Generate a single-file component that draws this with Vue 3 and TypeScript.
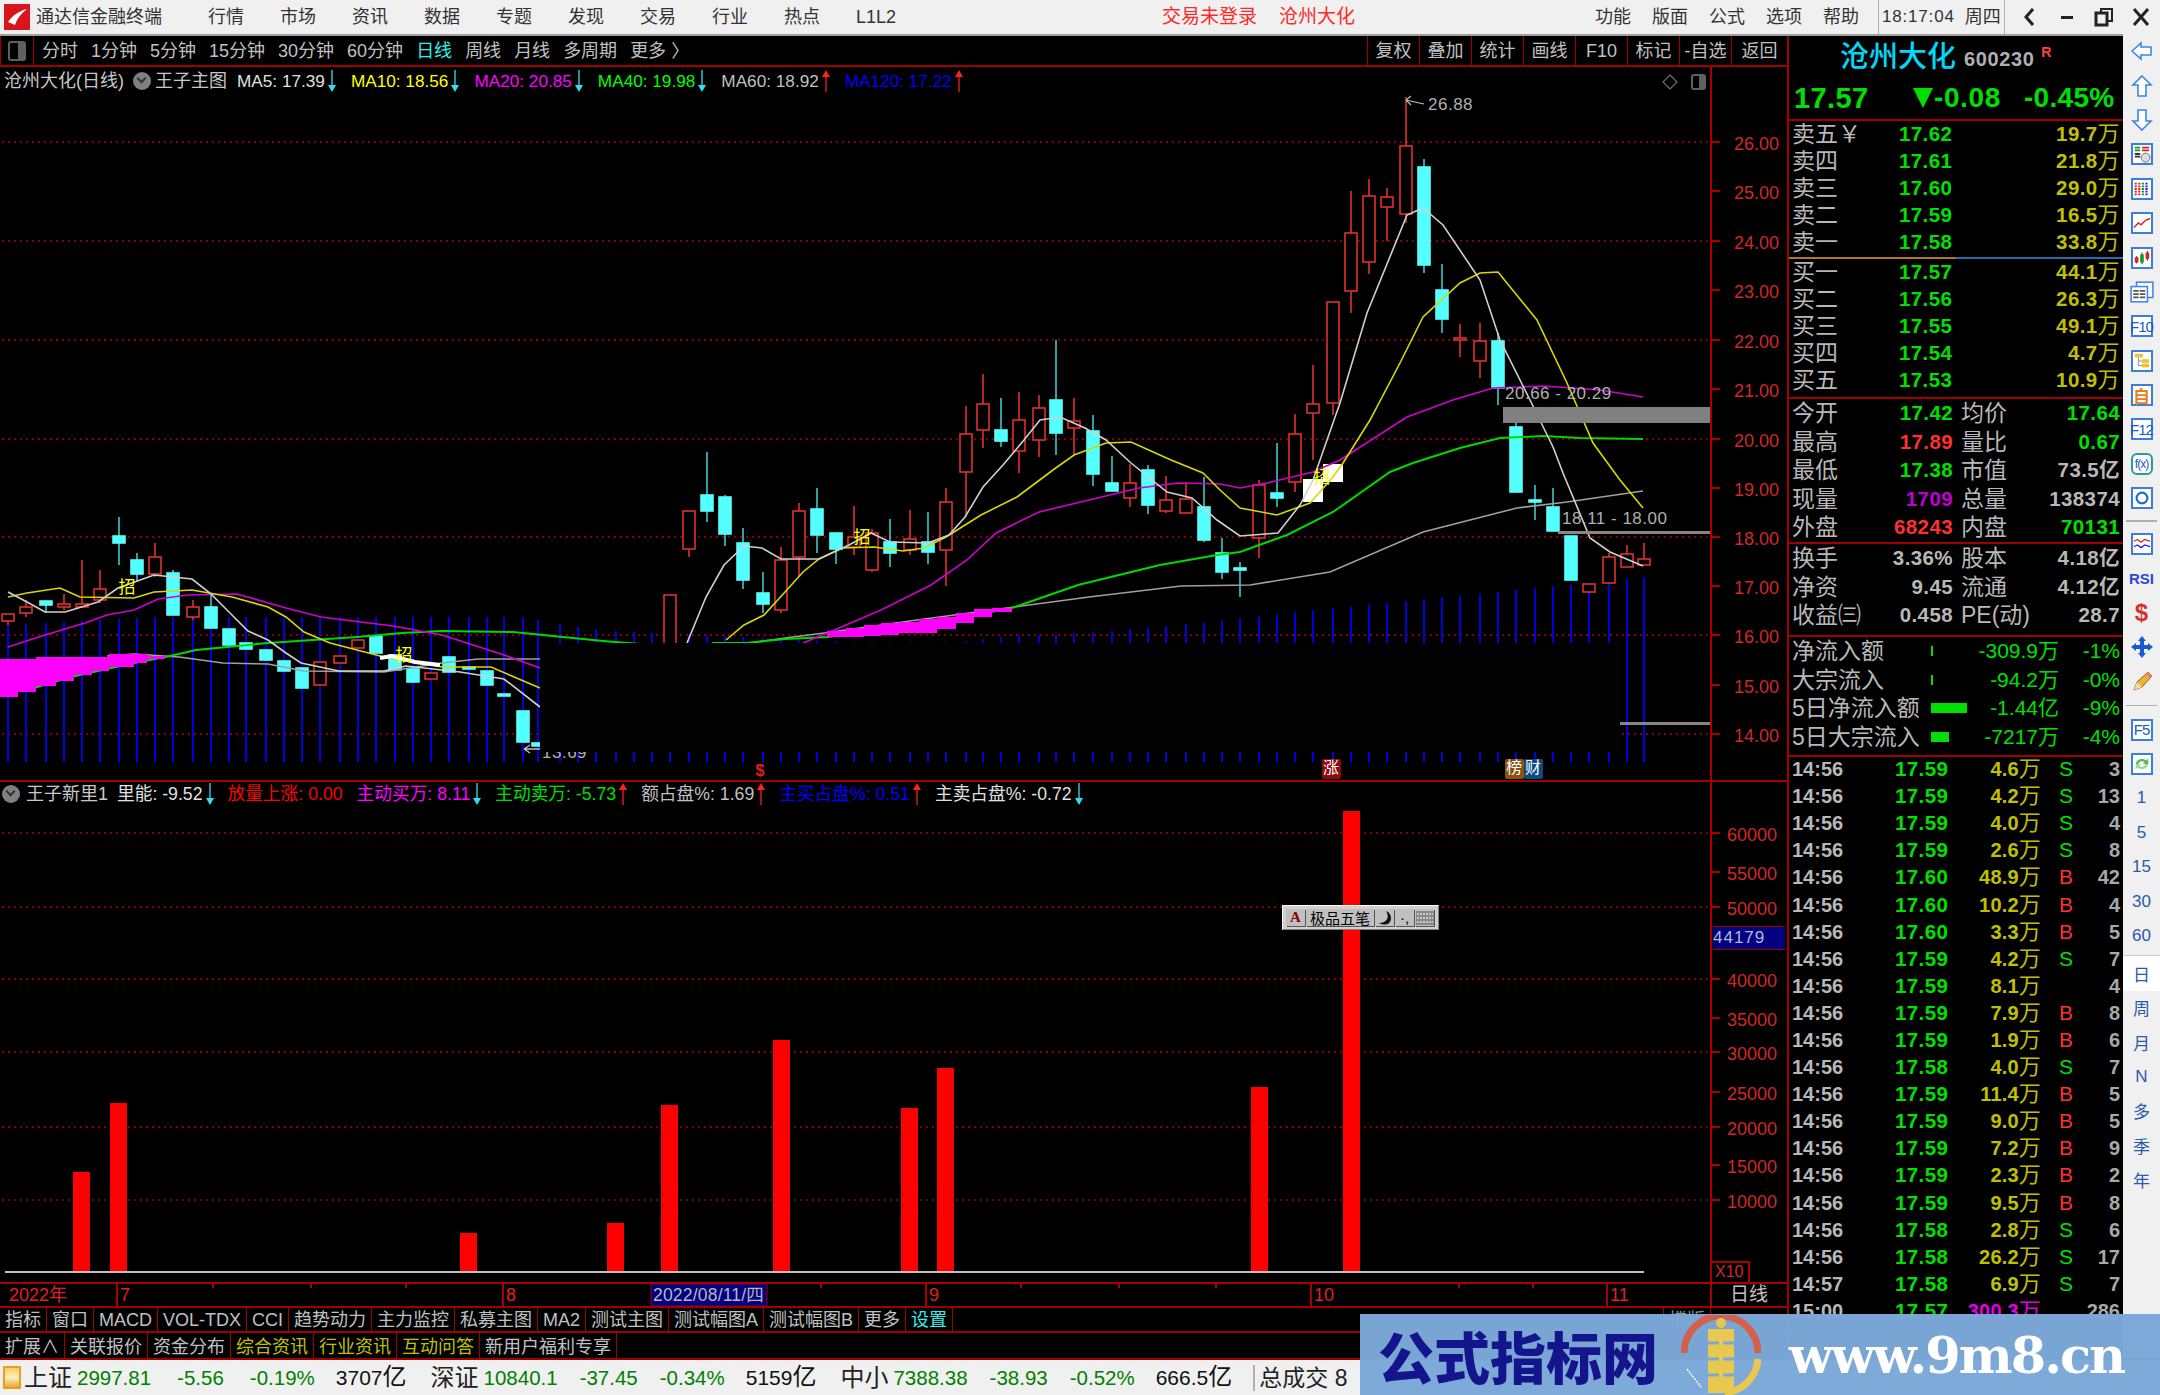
<script setup lang="ts">
type Candle = [number, number, number, number, number, 'r' | 'c']
type Pt = [number, number]

// x, high, body top, body bottom, low
const candles: Candle[] = [
  [8, 614, 614, 621, 625, 'r'], [26, 600, 607, 613, 617, 'r'], [46, 601, 601, 605, 613, 'c'], [64, 594, 604, 607, 610, 'r'],
  [82, 560, 604, 607, 607, 'r'], [100, 570, 589, 600, 603, 'r'], [119, 517, 536, 543, 565, 'c'], [137, 553, 560, 574, 582, 'c'],
  [155, 543, 557, 574, 577, 'r'], [173, 570, 573, 615, 615, 'c'], [193, 600, 607, 617, 620, 'r'], [211, 595, 607, 628, 628, 'c'],
  [229, 629, 629, 645, 645, 'c'], [246, 643, 643, 649, 649, 'c'], [266, 650, 650, 660, 660, 'c'], [284, 661, 661, 671, 671, 'c'],
  [302, 668, 668, 688, 688, 'c'], [320, 662, 662, 685, 685, 'r'], [340, 656, 656, 663, 663, 'r'], [358, 640, 640, 648, 648, 'r'],
  [376, 636, 636, 653, 653, 'c'], [395, 655, 655, 670, 670, 'c'], [413, 669, 669, 682, 682, 'c'], [431, 673, 673, 679, 679, 'r'],
  [449, 657, 657, 672, 672, 'c'], [469, 667, 667, 669, 669, 'c'], [487, 671, 671, 685, 685, 'c'], [504, 694, 694, 696, 696, 'c'],
  [523, 711, 711, 742, 742, 'c'], [538, 743, 743, 746, 746, 'c'],
  [670, 595, 595, 660, 660, 'r'], [689, 511, 511, 549, 557, 'r'], [707, 452, 495, 511, 522, 'c'], [725, 495, 497, 534, 546, 'c'],
  [743, 528, 543, 580, 589, 'c'], [763, 572, 593, 604, 613, 'c'], [781, 547, 560, 610, 613, 'r'], [799, 503, 511, 557, 577, 'r'],
  [817, 488, 509, 535, 553, 'c'], [836, 533, 533, 549, 564, 'c'], [854, 506, 537, 547, 555, 'r'], [872, 529, 533, 570, 572, 'r'],
  [890, 519, 542, 553, 567, 'c'], [910, 510, 539, 550, 555, 'r'], [928, 512, 542, 552, 564, 'c'], [946, 488, 502, 550, 586, 'r'],
  [966, 406, 434, 472, 517, 'r'], [983, 374, 404, 430, 448, 'r'], [1001, 398, 430, 441, 447, 'c'], [1019, 392, 420, 451, 473, 'r'],
  [1039, 395, 408, 440, 457, 'r'], [1056, 340, 400, 433, 455, 'c'], [1074, 398, 421, 428, 455, 'r'], [1093, 415, 431, 474, 486, 'c'],
  [1112, 456, 483, 491, 491, 'c'], [1130, 464, 483, 498, 507, 'r'], [1148, 465, 470, 505, 514, 'c'], [1166, 476, 500, 511, 513, 'r'],
  [1186, 482, 499, 513, 514, 'r'], [1204, 477, 507, 540, 542, 'c'], [1222, 538, 553, 572, 579, 'c'], [1240, 562, 568, 570, 597, 'c'],
  [1259, 480, 485, 538, 558, 'r'], [1277, 443, 493, 498, 507, 'c'], [1295, 414, 434, 482, 492, 'r'], [1313, 365, 404, 413, 460, 'r'],
  [1333, 302, 302, 403, 415, 'r'], [1351, 191, 233, 291, 313, 'r'], [1369, 179, 196, 262, 274, 'r'], [1387, 188, 197, 207, 241, 'r'],
  [1406, 97, 146, 214, 223, 'r'], [1424, 159, 167, 265, 273, 'c'], [1442, 264, 290, 319, 333, 'c'], [1460, 324, 338, 340, 357, 'r'],
  [1480, 323, 341, 361, 378, 'r'], [1498, 333, 341, 388, 405, 'c'], [1516, 423, 427, 492, 492, 'c'], [1535, 485, 500, 502, 520, 'c'],
  [1553, 488, 507, 531, 531, 'c'], [1571, 536, 536, 580, 580, 'c'], [1589, 584, 584, 592, 592, 'r'], [1609, 553, 557, 583, 583, 'r'],
  [1627, 545, 554, 567, 567, 'r'], [1644, 543, 559, 565, 565, 'r'],
]

const barTop: Pt[] = [[0, 625], [150, 617], [520, 617], [600, 630], [700, 635], [850, 642], [960, 642], [1000, 637], [1100, 632], [1200, 623], [1300, 612], [1644, 577]]

function topAt(x: number): number {
  for (let i = 1; i < barTop.length; i++) {
    const [x0, y0] = barTop[i - 1]
    const [x1, y1] = barTop[i]
    if (x <= x1) return y0 + ((y1 - y0) * (x - x0)) / (x1 - x0)
  }
  return 577
}

const barXs = [...candles.map((c) => c[0]), 560, 578, 596, 616, 634, 652]

const toPath = (pts: Pt[]) => pts.map((p) => p.join(',')).join(' ')

const ma5Left: Pt[] = [[8, 592], [27, 602], [45, 612], [65, 612], [98, 602], [118, 588], [154, 575], [192, 579], [210, 593], [230, 613], [248, 631], [268, 640], [286, 653], [301, 663], [339, 671], [384, 671], [406, 666], [460, 672], [504, 679], [540, 707]]
const ma10Left: Pt[] = [[8, 597], [27, 593], [60, 588], [80, 597], [134, 598], [154, 592], [192, 590], [232, 597], [268, 607], [286, 617], [304, 632], [330, 643], [384, 657], [442, 667], [491, 667], [540, 688]]
const ma20Left: Pt[] = [[8, 647], [45, 635], [85, 623], [107, 615], [134, 610], [158, 599], [188, 595], [237, 594], [286, 608], [321, 617], [393, 626], [442, 635], [504, 655], [540, 668]]
const ma40Left: Pt[] = [[27, 690], [71, 677], [134, 663], [170, 656], [196, 650], [268, 643], [357, 637], [402, 633], [442, 631], [513, 632], [603, 641], [640, 644]]
const ma60Left: Pt[] = [[107, 656], [134, 654], [179, 657], [223, 663], [268, 664], [304, 671], [384, 672], [442, 663], [478, 659], [540, 659]]

const ma5: Pt[] = [[687, 643], [706, 597], [724, 565], [744, 546], [762, 548], [781, 559], [819, 559], [849, 545], [871, 533], [890, 542], [928, 543], [949, 535], [965, 517], [983, 487], [1003, 465], [1024, 440], [1040, 420], [1060, 417], [1085, 428], [1106, 440], [1131, 463], [1167, 492], [1192, 498], [1217, 520], [1240, 536], [1278, 533], [1300, 505], [1313, 480], [1340, 403], [1367, 313], [1407, 215], [1423, 208], [1443, 225], [1480, 280], [1500, 340], [1530, 400], [1553, 447], [1563, 473], [1590, 538], [1610, 552], [1643, 566]]
const ma10: Pt[] = [[726, 640], [744, 625], [764, 615], [785, 592], [803, 572], [819, 559], [842, 548], [874, 547], [903, 551], [924, 548], [946, 537], [981, 515], [1017, 497], [1053, 470], [1074, 455], [1106, 443], [1131, 442], [1171, 460], [1203, 473], [1220, 490], [1240, 508], [1277, 515], [1310, 503], [1333, 477], [1343, 463], [1370, 420], [1400, 363], [1423, 317], [1460, 283], [1480, 273], [1498, 272], [1537, 320], [1567, 383], [1593, 443], [1620, 480], [1643, 508]]
const ma20: Pt[] = [[803, 643], [839, 628], [881, 610], [931, 585], [967, 560], [996, 533], [1039, 512], [1089, 500], [1139, 488], [1178, 483], [1220, 484], [1240, 488], [1267, 483], [1313, 472], [1340, 460], [1407, 417], [1453, 400], [1493, 388], [1543, 386], [1600, 390], [1643, 397]]
const ma40: Pt[] = [[712, 643], [746, 643], [785, 639], [828, 637], [920, 625], [1012, 608], [1078, 585], [1160, 565], [1217, 555], [1240, 552], [1287, 535], [1333, 512], [1390, 472], [1413, 463], [1460, 448], [1500, 438], [1543, 436], [1580, 438], [1643, 439]]
const ma60: Pt[] = [[749, 643], [785, 638], [824, 633], [917, 620], [1014, 607], [1089, 597], [1181, 586], [1250, 585], [1330, 572], [1423, 532], [1517, 508], [1567, 502], [1643, 491]]

const lines = [
  { pts: ma60Left, cls: 'l-gray' }, { pts: ma60, cls: 'l-gray' },
  { pts: ma40Left, cls: 'l-green' }, { pts: ma40, cls: 'l-green' },
  { pts: ma20Left, cls: 'l-mag' }, { pts: ma20, cls: 'l-mag' },
  { pts: ma10Left, cls: 'l-yel' }, { pts: ma10, cls: 'l-yel' },
  { pts: ma5Left, cls: 'l-wht' }, { pts: ma5, cls: 'l-wht' },
]

// x0, x1, top, bottom
const bandSteps = [
  [0, 18, 659, 697], [18, 36, 659, 692], [36, 56, 657, 686], [56, 74, 657, 681], [74, 92, 657, 675], [92, 109, 657, 671], [109, 134, 654, 667], [134, 147, 654, 663], [147, 165, 656, 659],
  [827, 846, 631, 637], [846, 864, 628, 637], [864, 881, 625, 636], [881, 899, 623, 635], [899, 919, 622, 633], [919, 937, 619, 633], [937, 956, 617, 629], [956, 974, 613, 623], [974, 992, 609, 617], [992, 1012, 608, 612],
]

const priceAxis: Pt[] = [[26, 142], [25, 191], [24, 241], [23, 290], [22, 340], [21, 389], [20, 439], [19, 488], [18, 537], [17, 586], [16, 635], [15, 685], [14, 734]]
const dotsMain = [142, 241, 340, 439, 537, 635, 734]

const volAxis: Pt[] = [[60000, 833], [55000, 872], [50000, 907], [40000, 979], [35000, 1018], [30000, 1052], [25000, 1092], [20000, 1127], [15000, 1165], [10000, 1200]]
const dotsSub = [833, 907, 979, 1052, 1127, 1200]
const volBars: Pt[] = [[73, 1172], [110, 1103], [460, 1233], [607, 1223], [661, 1105], [773, 1040], [901, 1108], [937, 1068], [1251, 1087], [1343, 811]]

const mainHeader = [
  { text: 'MA5: 17.39', color: '#e0e0e0', up: false },
  { text: 'MA10: 18.56', color: '#ffff00', up: false },
  { text: 'MA20: 20.85', color: '#ff00ff', up: false },
  { text: 'MA40: 19.98', color: '#00ff00', up: false },
  { text: 'MA60: 18.92', color: '#c0c0c0', up: true },
  { text: 'MA120: 17.22', color: '#0000ff', up: true },
]
const subHeader = [
  { text: '里能: -9.52', color: '#e0e0e0', up: false },
  { text: '放量上涨: 0.00', color: '#ff0000', up: null },
  { text: '主动买万: 8.11', color: '#ff00ff', up: false },
  { text: '主动卖万: -5.73', color: '#00e000', up: true },
  { text: '额占盘%: 1.69', color: '#c0c0c0', up: true },
  { text: '主买占盘%: 0.51', color: '#0000ff', up: true },
  { text: '主卖占盘%: -0.72', color: '#e0e0e0', up: false },
]

const menus = ['行情', '市场', '资讯', '数据', '专题', '发现', '交易', '行业', '热点', 'L1L2']
const rightMenus = ['功能', '版面', '公式', '选项', '帮助']
const periods = ['分时', '1分钟', '5分钟', '15分钟', '30分钟', '60分钟', '日线', '周线', '月线', '多周期', '更多 〉']
const actions = ['复权', '叠加', '统计', '画线', 'F10', '标记', '-自选', '返回']

const tabsA = ['指标', '窗口', 'MACD', 'VOL-TDX', 'CCI', '趋势动力', '主力监控', '私募主图', 'MA2', '测试主图', '测试幅图A', '测试幅图B', '更多', '设置']
const tabsB = ['扩展∧', '关联报价', '资金分布', '综合资讯', '行业资讯', '互动问答', '新用户福利专享']

const dateTicks = [213, 311, 406, 821, 1021, 1119, 1216, 1459, 1533]
const dateMarks = [{ x: 117, t: '7' }, { x: 503, t: '8' }, { x: 926, t: '9' }, { x: 1311, t: '10' }, { x: 1607, t: '11' }]

const sells = [['卖五￥', '17.62', '19.7'], ['卖四', '17.61', '21.8'], ['卖三', '17.60', '29.0'], ['卖二', '17.59', '16.5'], ['卖一', '17.58', '33.8']]
const buys = [['买一', '17.57', '44.1'], ['买二', '17.56', '26.3'], ['买三', '17.55', '49.1'], ['买四', '17.54', '4.7'], ['买五', '17.53', '10.9']]

const quoteA = [
  { a: '今开', b: '17.42', bc: 'green', c: '均价', d: '17.64', dc: 'green' },
  { a: '最高', b: '17.89', bc: 'red', c: '量比', d: '0.67', dc: 'green' },
  { a: '最低', b: '17.38', bc: 'green', c: '市值', d: '73.5亿', dc: 'gray' },
  { a: '现量', b: '1709', bc: 'purple', c: '总量', d: '138374', dc: 'gray' },
  { a: '外盘', b: '68243', bc: 'red', c: '内盘', d: '70131', dc: 'green' },
]
const quoteB = [
  { a: '换手', b: '3.36%', bc: 'gray', c: '股本', d: '4.18亿', dc: 'gray' },
  { a: '净资', b: '9.45', bc: 'gray', c: '流通', d: '4.12亿', dc: 'gray' },
  { a: '收益㈢', b: '0.458', bc: 'gray', c: 'PE(动)', d: '28.7', dc: 'gray' },
]
const flows = [
  { name: '净流入额', w: 2, v: '-309.9万', p: '-1%' },
  { name: '大宗流入', w: 2, v: '-94.2万', p: '-0%' },
  { name: '5日净流入额', w: 36, v: '-1.44亿', p: '-9%' },
  { name: '5日大宗流入', w: 18, v: '-7217万', p: '-4%' },
]

const ticks = [
  ['14:56', '17.59', '4.6', 'S', '3'], ['14:56', '17.59', '4.2', 'S', '13'], ['14:56', '17.59', '4.0', 'S', '4'],
  ['14:56', '17.59', '2.6', 'S', '8'], ['14:56', '17.60', '48.9', 'B', '42'], ['14:56', '17.60', '10.2', 'B', '4'],
  ['14:56', '17.60', '3.3', 'B', '5'], ['14:56', '17.59', '4.2', 'S', '7'], ['14:56', '17.59', '8.1', '', '4'],
  ['14:56', '17.59', '7.9', 'B', '8'], ['14:56', '17.59', '1.9', 'B', '6'], ['14:56', '17.58', '4.0', 'S', '7'],
  ['14:56', '17.59', '11.4', 'B', '5'], ['14:56', '17.59', '9.0', 'B', '5'], ['14:56', '17.59', '7.2', 'B', '9'],
  ['14:56', '17.59', '2.3', 'B', '2'], ['14:56', '17.59', '9.5', 'B', '8'], ['14:56', '17.58', '2.8', 'S', '6'],
  ['14:56', '17.58', '26.2', 'S', '17'], ['14:57', '17.58', '6.9', 'S', '7'], ['15:00', '17.57', '300.3', '', '286'],
]

const indices = [
  { name: '上证', v: ['2997.81', '-5.56', '-0.19%'], amt: '3707' },
  { name: '深证', v: ['10840.1', '-37.45', '-0.34%'], amt: '5159' },
  { name: '中小', v: ['7388.38', '-38.93', '-0.52%'], amt: '666.5' },
]
</script>

<template>
  <div class="app">
    <header class="titlebar">
      <svg class="logo" viewBox="0 0 26 26">
        <rect width="26" height="26" fill="#d8141c" />
        <path d="M4 18 C9 11 15 7 23 5 C17 10 14 13 11 21 Z" fill="#fff" />
      </svg>
      <span class="app-name">通达信金融终端</span>
      <nav class="menu">
        <span v-for="m in menus" :key="m">{{ m }}</span>
      </nav>
      <div class="alert">
        <span>交易未登录</span>
        <span>沧州大化</span>
      </div>
      <nav class="menu menu-right">
        <span v-for="m in rightMenus" :key="m">{{ m }}</span>
      </nav>
      <div class="clock">
        <span class="time">18:17:04</span>
        <span>周四</span>
      </div>
      <div class="winbtns">
        <svg viewBox="0 0 24 24"><path d="M15 4 L8 12 L15 20" fill="none" stroke="#222" stroke-width="3" /></svg>
        <svg viewBox="0 0 24 24"><rect x="6" y="11" width="12" height="3" fill="#222" /></svg>
        <svg viewBox="0 0 24 24"><rect x="9" y="4" width="11" height="12" fill="none" stroke="#222" stroke-width="2" /><rect x="4" y="8" width="11" height="12" fill="#f0f0f0" stroke="#222" stroke-width="3" /></svg>
        <svg viewBox="0 0 24 24"><path d="M5 4 L19 20 M19 4 L5 20" stroke="#222" stroke-width="3" /></svg>
      </div>
    </header>

    <div class="workspace">
      <section class="left">
        <div class="toolbar">
          <div class="pane-toggle"><i class="toggle-ico"></i></div>
          <div class="periods">
            <span v-for="p in periods" :key="p" :class="{ active: p === '日线' }">{{ p }}</span>
          </div>
          <div class="actions">
            <span v-for="a in actions" :key="a">{{ a }}</span>
          </div>
        </div>

        <div class="pane pane-main">
          <svg class="plot" viewBox="0 67 1787 713" width="1787" height="713">
            <line v-for="y in dotsMain" :key="y" x1="2" x2="1711" :y1="y" :y2="y" class="dots" />
            <rect v-for="x in barXs" :key="'b' + x" :x="x - 1" :y="topAt(x)" width="2" :height="762 - topAt(x)" fill="#0000e0" />
            <g v-for="c in candles" :key="'c' + c[0]">
              <line :x1="c[0]" :x2="c[0]" :y1="c[1]" :y2="c[4]" :stroke="c[5] === 'r' ? '#e03030' : '#3ccaca'" stroke-width="1.6" />
              <rect
                :x="c[0] - 6"
                :y="c[2]"
                width="12"
                :height="c[3] - c[2]"
                :fill="c[5] === 'r' ? '#000' : '#54ffff'"
                :stroke="c[5] === 'r' ? '#e03030' : '#54ffff'"
                stroke-width="1.6"
              />
            </g>
            <rect x="1303" y="479" width="20" height="23" fill="#fff" />
            <rect x="1323" y="464" width="20" height="18" fill="#fff" />
            <polyline v-for="(l, i) in lines" :key="'l' + i" :points="toPath(l.pts)" :class="l.cls" fill="none" />
            <rect v-for="(s, i) in bandSteps" :key="'s' + i" :x="s[0]" :y="s[2]" :width="s[1] - s[0]" :height="s[3] - s[2]" fill="#ff00ff" />
            <polyline points="380,658 392,656 415,662 440,665" fill="none" stroke="#fff" stroke-width="4" />
            <text v-for="p in [[127, 589], [404, 657], [862, 539], [1322, 479]]" :key="p[0]" :x="p[0]" :y="p[1]" class="zhao" text-anchor="middle" dominant-baseline="middle">招</text>

            <!-- blanked out part of the capture -->
            <text x="542" y="754" class="lbl" dominant-baseline="middle">13.69</text>
            <rect x="540" y="643" width="1080" height="109" fill="#020202" />
            <path d="M524 749 H540 M524 749 L530 745 M524 749 L530 753" stroke="#c0c0c0" stroke-width="1.4" fill="none" />

            <rect x="1503" y="407" width="207" height="16" fill="#808080" />
            <rect x="1558" y="531" width="152" height="3" fill="#868686" />
            <rect x="1620" y="722" width="90" height="3" fill="#868686" />
            <text x="1505" y="395" class="lbl" dominant-baseline="middle">20.66 - 20.29</text>
            <text x="1562" y="520" class="lbl" dominant-baseline="middle">18.11 - 18.00</text>
            <text x="1428" y="106" class="lbl" dominant-baseline="middle">26.88</text>
            <path d="M1406 100 L1424 104 M1406 100 L1411 96 M1406 100 L1411 105" stroke="#c0c0c0" stroke-width="1.2" fill="none" />

            <text x="760" y="772" class="dollar" text-anchor="middle" dominant-baseline="middle">$</text>
            <rect x="1322" y="759" width="19" height="20" rx="2" fill="#8a0c0c" />
            <text x="1331" y="769" class="chip" text-anchor="middle" dominant-baseline="middle">涨</text>
            <rect x="1505" y="759" width="19" height="20" rx="2" fill="#8a5212" />
            <text x="1514" y="769" class="chip" text-anchor="middle" dominant-baseline="middle">榜</text>
            <rect x="1524" y="759" width="19" height="20" rx="2" fill="#0c4a80" />
            <text x="1533" y="769" class="chip" text-anchor="middle" dominant-baseline="middle">财</text>

            <line x1="1711" x2="1711" y1="67" y2="780" class="axis" />
            <g v-for="t in priceAxis" :key="t[0]">
              <line x1="1711" x2="1720" :y1="t[1]" :y2="t[1]" class="axis" />
              <text x="1734" :y="t[1] + 3" class="tick" dominant-baseline="middle">{{ t[0].toFixed(2) }}</text>
            </g>
          </svg>

          <div class="pane-head">
            <span class="stock">沧州大化(日线)</span>
            <i class="chev"></i>
            <span class="stock ind">王子主图</span>
            <span v-for="h in mainHeader" :key="h.text" class="head-item" :style="{ color: h.color }">
              {{ h.text }}
              <svg class="arrow" viewBox="0 0 8 22">
                <path v-if="h.up" d="M4 22 V5" stroke="#e02020" stroke-width="1.4" />
                <path v-if="h.up" d="M4 0 L8 7 H0 Z" fill="#ff2020" />
                <path v-if="!h.up" d="M4 0 V17" stroke="#30d0e0" stroke-width="1.4" />
                <path v-if="!h.up" d="M4 22 L8 15 H0 Z" fill="#30e0f0" />
              </svg>
            </span>
          </div>
          <div class="corner-icons">
            <svg viewBox="0 0 18 18" width="18" height="18"><path d="M9 2 L16 9 L9 16 L2 9 Z" fill="none" stroke="#707070" stroke-width="1.2" /></svg>
            <i class="toggle-ico small"></i>
          </div>
        </div>

        <div class="pane pane-sub">
          <svg class="plot" viewBox="0 782 1787 500" width="1787" height="500">
            <line v-for="y in dotsSub" :key="y" x1="2" x2="1711" :y1="y" :y2="y" class="dots" />
            <rect v-for="b in volBars" :key="b[0]" :x="b[0]" :y="b[1]" width="17" :height="1272 - b[1]" fill="#ff0000" />
            <rect x="5" y="1271" width="1639" height="2" fill="#c0c0c0" />
            <line x1="1711" x2="1711" y1="782" y2="1282" class="axis" />
            <g v-for="t in volAxis" :key="t[0]">
              <line x1="1711" x2="1720" :y1="t[1]" :y2="t[1]" class="axis" />
              <text x="1727" :y="t[1] + 3" class="tick" dominant-baseline="middle">{{ t[0] }}</text>
            </g>
            <path d="M1711 1262 H1749 V1282" fill="none" class="axis" />
            <text x="1715" y="1273" class="tick small" dominant-baseline="middle">X10</text>
          </svg>
          <div class="pane-head sub">
            <i class="chev"></i>
            <span class="stock ind">王子新里1</span>
            <span v-for="h in subHeader" :key="h.text" class="head-item" :style="{ color: h.color }">
              {{ h.text }}
              <svg v-if="h.up !== null" class="arrow" viewBox="0 0 8 22">
                <path v-if="h.up" d="M4 22 V5" stroke="#e02020" stroke-width="1.4" />
                <path v-if="h.up" d="M4 0 L8 7 H0 Z" fill="#ff2020" />
                <path v-if="!h.up" d="M4 0 V17" stroke="#30d0e0" stroke-width="1.4" />
                <path v-if="!h.up" d="M4 22 L8 15 H0 Z" fill="#30e0f0" />
              </svg>
            </span>
          </div>
          <div class="cur-value">44179</div>
          <div class="ime">
            <span class="ime-btn ime-a">A</span>
            <span class="ime-btn ime-name">极品五笔</span>
            <span class="ime-btn ime-moon">
              <svg viewBox="0 0 16 16" width="16" height="16"><path d="M9 1 C13 7 10 13 2 13 C7 16 14 15 14 8 C14 5 12 2 9 1 Z" fill="#111" /></svg>
            </span>
            <span class="ime-btn ime-dot">·,</span>
            <span class="ime-btn ime-kbd">
              <svg viewBox="0 0 18 14" width="18" height="14"><rect width="18" height="14" fill="#888" /><path d="M1 3 H17 M1 7 H17 M1 11 H17" stroke="#ddd" stroke-width="1.5" stroke-dasharray="2 1" /></svg>
            </span>
          </div>
        </div>

        <div class="date-axis">
          <svg viewBox="0 0 1787 22" width="1787" height="22">
            <text x="9" y="12" class="date-red" dominant-baseline="middle">2022年</text>
            <line v-for="x in dateTicks" :key="x" :x1="x" :x2="x" y1="0" y2="4" class="axis" />
            <g v-for="m in dateMarks" :key="m.x">
              <line :x1="m.x" :x2="m.x" y1="0" y2="22" class="axis" />
              <text :x="m.x + 3" y="12" class="date-red" dominant-baseline="middle">{{ m.t }}</text>
            </g>
            <rect x="651" y="0" width="116" height="22" fill="#000080" stroke="#a00000" />
            <text x="653" y="12" class="date-cur" dominant-baseline="middle">2022/08/11/四</text>
            <line x1="1711" x2="1711" y1="0" y2="22" class="axis" />
            <text x="1749" y="12" class="date-day" text-anchor="middle" dominant-baseline="middle">日线</text>
          </svg>
        </div>

        <div class="tabs tabs-a">
          <span v-for="t in tabsA" :key="t" :class="{ cyan: t === '设置' }">{{ t }}</span>
          <span class="tabs-end">撑版</span>
        </div>
        <div class="tabs tabs-b">
          <span v-for="(t, i) in tabsB" :key="t" :class="{ olive: i >= 3 && i <= 5 }">{{ t }}</span>
        </div>
      </section>

      <aside class="panel">
        <div class="name-row">
          <span class="name">沧州大化</span>
          <span class="code">600230</span>
          <sup class="r">R</sup>
        </div>
        <div class="price-row">
          <span class="last">17.57</span>
          <span class="tri"></span>
          <span class="chg">-0.08</span>
          <span class="pct">-0.45%</span>
        </div>

        <div class="book">
          <div v-for="r in sells" :key="r[0]" class="book-row">
            <span class="lab">{{ r[0] }}</span>
            <span class="pri">{{ r[1] }}</span>
            <span class="vol">{{ r[2] }}<em>万</em></span>
          </div>
        </div>
        <div class="mid-line"></div>
        <div class="book book-buy">
          <div v-for="r in buys" :key="r[0]" class="book-row">
            <span class="lab">{{ r[0] }}</span>
            <span class="pri">{{ r[1] }}</span>
            <span class="vol">{{ r[2] }}<em>万</em></span>
          </div>
        </div>

        <div class="quote">
          <div v-for="q in quoteA" :key="q.a" class="q-row">
            <span class="lab">{{ q.a }}</span>
            <span class="qv" :class="q.bc">{{ q.b }}</span>
            <span class="lab q2">{{ q.c }}</span>
            <span class="qv" :class="q.dc">{{ q.d }}</span>
          </div>
        </div>
        <div class="quote quote-b">
          <div v-for="q in quoteB" :key="q.a" class="q-row">
            <span class="lab">{{ q.a }}</span>
            <span class="qv" :class="q.bc">{{ q.b }}</span>
            <span class="lab q2">{{ q.c }}</span>
            <span class="qv" :class="q.dc">{{ q.d }}</span>
          </div>
        </div>
        <div class="flows">
          <div v-for="f in flows" :key="f.name" class="flow-row">
            <span class="lab flow-name">{{ f.name }}</span>
            <span class="flow-bar"><i :style="{ width: f.w + 'px' }"></i></span>
            <span class="flow-v">{{ f.v }}</span>
            <span class="flow-p">{{ f.p }}</span>
          </div>
        </div>
        <div class="ticks">
          <div v-for="(t, i) in ticks" :key="i" class="tick-row">
            <span class="t-time">{{ t[0] }}</span>
            <span class="t-pri">{{ t[1] }}</span>
            <span class="t-vol" :class="{ big: t[2] === '300.3' }">{{ t[2] }}<em>万</em></span>
            <span class="t-side" :class="t[3] === 'B' ? 'red' : 'green'">{{ t[3] }}</span>
            <span class="t-cnt">{{ t[4] }}</span>
          </div>
        </div>
      </aside>

      <aside class="tools">
        <div class="tool"><svg viewBox="0 0 24 24"><path d="M2 12 L11 4 V8 H21 V16 H11 V20 Z" fill="#fff" stroke="#3a86e8" stroke-width="1.6" /></svg></div>
        <div class="tool"><svg viewBox="0 0 24 24"><path d="M12 2 L21 11 H16 V22 H8 V11 H3 Z" fill="#fff" stroke="#3a86e8" stroke-width="1.6" /></svg></div>
        <div class="tool"><svg viewBox="0 0 24 24"><path d="M12 22 L21 13 H16 V2 H8 V13 H3 Z" fill="#fff" stroke="#3a86e8" stroke-width="1.6" /></svg></div>
        <div class="tool"><span class="box"><svg viewBox="0 0 20 20"><path d="M2 3 H8 M2 6 H8" stroke="#0a9a30" stroke-width="2" /><path d="M10 3 H18 M10 6 H18" stroke="#e02020" stroke-width="2" /><path d="M2 10 H8 M2 13 H8" stroke="#333" stroke-width="2" /><circle cx="14" cy="14" r="5" fill="#ddd" stroke="#666" /></svg></span></div>
        <div class="tool"><span class="box"><svg viewBox="0 0 20 20"><path d="M3 3 V18 M7 3 V18" stroke="#e02020" stroke-width="2.4" stroke-dasharray="2 1" /><path d="M11 3 V18" stroke="#0a9a30" stroke-width="2.4" stroke-dasharray="2 1" /><path d="M15 3 V18" stroke="#2020e0" stroke-width="2.4" stroke-dasharray="2 1" /></svg></span></div>
        <div class="tool"><span class="box"><svg viewBox="0 0 20 20"><path d="M1 15 L6 10 L9 12 L14 7 L19 5" fill="none" stroke="#e02020" stroke-width="1.6" /></svg></span></div>
        <div class="tool"><span class="box"><svg viewBox="0 0 20 20"><path d="M4 8 V16 M10 4 V17 M16 2 V13" stroke="#111" stroke-width="1" /><rect x="2" y="9" width="4" height="6" fill="#e02020" /><rect x="8" y="6" width="4" height="9" fill="#0a9a30" /><rect x="14" y="4" width="4" height="7" fill="#e02020" /></svg></span></div>
        <div class="tool"><span class="box plain"><svg viewBox="0 0 22 20"><rect x="6" y="1" width="15" height="14" fill="#fff" stroke="#3a86e8" stroke-width="1.4" /><rect x="1" y="5" width="15" height="14" fill="#fff" stroke="#3a86e8" stroke-width="1.4" /><path d="M3 9 H14 M3 12 H14 M3 15 H14" stroke="#555" stroke-width="1.6" stroke-dasharray="5 1" /></svg></span></div>
        <div class="tool"><span class="box txt">F10</span></div>
        <div class="tool"><span class="box"><svg viewBox="0 0 20 20"><path d="M6 5 V15 H11 M6 10 H11" fill="none" stroke="#888" /><rect x="2" y="2" width="9" height="4" fill="#f0c030" /><rect x="10" y="8" width="8" height="4" fill="#f0c030" /><rect x="10" y="13" width="8" height="4" fill="#f0c030" /></svg></span></div>
        <div class="tool"><span class="box txt orange">自</span></div>
        <div class="tool"><span class="box txt">F12</span></div>
        <div class="tool"><span class="box round txt small">f(x)</span></div>
        <div class="tool"><span class="box"><svg viewBox="0 0 20 20"><circle cx="10" cy="10" r="6" fill="none" stroke="#1a6ad0" stroke-width="2.4" /></svg></span></div>
        <div class="tool-sep"></div>
        <div class="tool"><span class="box"><svg viewBox="0 0 20 20"><path d="M1 7 L5 5 L9 8 L13 5 L19 7" fill="none" stroke="#e02020" stroke-width="1.4" /><path d="M1 13 L5 11 L9 14 L13 11 L19 13" fill="none" stroke="#2020e0" stroke-width="1.4" /></svg></span></div>
        <div class="tool"><b class="rsi">RSI</b></div>
        <div class="tool"><b class="dollar-ico">$</b></div>
        <div class="tool"><svg viewBox="0 0 24 24"><path d="M12 1 L16 6 H14 V10 H18 V8 L23 12 L18 16 V14 H14 V18 H16 L12 23 L8 18 H10 V14 H6 V16 L1 12 L6 8 V10 H10 V6 H8 Z" fill="#1a5ad0" /></svg></div>
        <div class="tool"><svg viewBox="0 0 24 24"><path d="M4 20 L7 12 L18 2 L22 6 L12 17 Z" fill="#f0b030" stroke="#8a6a20" /><path d="M18 2 L22 6 L20 8 L16 4 Z" fill="#e88080" /><path d="M4 20 L7 12 L12 17 Z" fill="#f0dcb0" /></svg></div>
        <div class="tool-sep wide"></div>
        <div class="tool"><span class="box txt">F5</span></div>
        <div class="tool"><span class="box"><svg viewBox="0 0 20 20"><path d="M3 10 C4 4 11 3 15 6 L17 4 V10 H11 L13 8 C10 6 7 7 6 10 Z" fill="#50c050" /><path d="M17 10 C16 16 9 17 5 14 L3 16 V10 H9 L7 12 C10 14 13 13 14 10 Z" fill="#a0d8a0" /></svg></span></div>
        <div class="tool num">1</div>
        <div class="tool num">5</div>
        <div class="tool num">15</div>
        <div class="tool num">30</div>
        <div class="tool num">60</div>
        <div class="tool num day">日</div>
        <div class="tool num">周</div>
        <div class="tool num">月</div>
        <div class="tool num">N</div>
        <div class="tool num">多</div>
        <div class="tool num">季</div>
        <div class="tool num">年</div>
      </aside>
    </div>

    <footer class="status">
      <i class="status-ico"></i>
      <div v-for="x in indices" :key="x.name" class="index">
        <span class="ix-name">{{ x.name }}</span>
        <span class="ix-val first">{{ x.v[0] }}</span>
        <span class="ix-val">{{ x.v[1] }}</span>
        <span class="ix-val">{{ x.v[2] }}</span>
        <span class="ix-amt">{{ x.amt }}<em>亿</em></span>
      </div>
      <div class="turnover">总成交 8</div>
    </footer>

    <div class="watermark">
      <span class="wm-cn">公式指标网</span>
      <svg class="wm-logo" viewBox="0 0 80 80" width="80" height="80">
        <path d="M3 38 A37 37 0 0 1 77 38" fill="none" stroke="#d4604c" stroke-width="7" />
        <path d="M77 44 A37 37 0 0 1 44 78" fill="none" stroke="#e8c850" stroke-width="7" />
        <path d="M6 54 L20 72" stroke="#fff" stroke-width="1.4" stroke-dasharray="2 1" />
        <circle cx="40" cy="8" r="5" fill="#e8c850" />
        <rect x="27" y="14" width="26" height="64" fill="#e8c850" />
        <path d="M27 28 H38 M42 28 H53 M27 44 H38 M42 44 H53 M27 60 H38 M42 60 H53" stroke="#7ba8d8" stroke-width="3" />
      </svg>
      <span class="wm-url">www.9m8.cn</span>
    </div>
  </div>
</template>

<style>
html,
body {
  margin: 0;
  background: #000;
}
</style>

<style scoped>
.app {
  position: relative;
  display: flex;
  flex-direction: column;
  width: 2160px;
  height: 1395px;
  overflow: hidden;
  background: #000;
  color: #c0c0c0;
  font-family: "Liberation Sans", "Noto Sans CJK SC", sans-serif;
}

/* title bar */
.titlebar {
  display: flex;
  align-items: center;
  flex: none;
  height: 34px;
  border-bottom: 2px solid #a0a0a0;
  background: #f0f0f0;
  color: #333;
  font-size: 18px;
  line-height: 22px;
}
.logo {
  width: 26px;
  height: 26px;
  margin-left: 4px;
}
.app-name {
  margin-left: 6px;
  width: 172px;
}
.menu {
  display: flex;
  gap: 36px;
}
.alert {
  display: flex;
  gap: 22px;
  margin-left: 266px;
  color: #ff2a2a;
  font-size: 19px;
}
.menu-right {
  gap: 21px;
  margin-left: 240px;
}
.clock {
  display: flex;
  align-items: center;
  gap: 10px;
  height: 34px;
  margin-left: 19px;
  padding: 0 3px;
  border-left: 1px solid #b0b0b0;
  border-right: 1px solid #b0b0b0;
  font-size: 18px;
}
.time {
  font-size: 17px;
  letter-spacing: 0.8px;
}
.winbtns {
  display: flex;
  gap: 13px;
  margin-left: 13px;
}
.winbtns svg {
  width: 24px;
  height: 24px;
}

/* main columns */
.workspace {
  display: flex;
  height: 1324px;
  flex: none;
}
.left {
  display: flex;
  flex-direction: column;
  flex: none;
  width: 1787px;
}
.toolbar {
  display: flex;
  align-items: stretch;
  flex: none;
  height: 29px;
  border-bottom: 2px solid #a00000;
  font-size: 18px;
  line-height: 22px;
}
.pane-toggle {
  display: flex;
  align-items: center;
  justify-content: center;
  width: 34px;
  border-right: 1px solid #a00000;
  border-left: 1px solid #a00000;
  box-sizing: border-box;
}
.toggle-ico {
  display: block;
  width: 14px;
  height: 16px;
  border: 2px solid #606060;
  border-radius: 3px;
  background: linear-gradient(90deg, #000 55%, #606060 55%);
}
.toggle-ico.small {
  width: 11px;
  height: 12px;
}
.periods {
  display: flex;
  align-items: center;
  gap: 13px;
  margin-left: 8px;
  padding-top: 1px;
}
.active {
  color: #30f0f0;
}
.actions {
  display: flex;
  margin-left: auto;
}
.actions span {
  display: flex;
  align-items: center;
  justify-content: center;
  width: 52px;
  padding-top: 1px;
  border-left: 1px solid #a00000;
  box-sizing: border-box;
}
.actions span:last-child {
  width: 56px;
}

.pane {
  position: relative;
  flex: none;
}
.pane-main {
  height: 713px;
  border-bottom: 2px solid #a00000;
}
.pane-sub {
  height: 500px;
}
.plot {
  position: absolute;
  left: 0;
  top: 0;
  display: block;
}
.pane-head {
  position: absolute;
  left: 4px;
  top: 3px;
  display: flex;
  align-items: center;
  height: 22px;
  font-size: 17.2px;
  line-height: 22px;
  white-space: nowrap;
}
.pane-head.sub {
  left: 2px;
  top: 1px;
  font-size: 17.7px;
}
.stock {
  color: #c8c8c8;
  font-size: 18px;
}
.ind {
  margin-left: 4px;
  margin-right: 10px;
}
.chev {
  position: relative;
  display: block;
  width: 18px;
  height: 18px;
  margin-left: 9px;
  border-radius: 50%;
  background: #808080;
}
.chev::after {
  content: "";
  position: absolute;
  left: 5px;
  top: 3px;
  width: 7px;
  height: 7px;
  border-right: 2px solid #333;
  border-bottom: 2px solid #333;
  transform: rotate(45deg);
  box-sizing: border-box;
}
.sub .chev {
  margin-left: 0;
}
.sub .ind {
  margin-left: 6px;
  margin-right: 9px;
}
.head-item {
  display: flex;
  align-items: center;
  gap: 3px;
  margin-right: 15px;
}
.sub .head-item {
  margin-right: 14px;
}
.arrow {
  width: 8px;
  height: 22px;
}
.corner-icons {
  position: absolute;
  right: 81px;
  top: 6px;
  display: flex;
  align-items: center;
  gap: 12px;
}

.dots {
  stroke: #b00000;
  stroke-width: 1.4;
  stroke-dasharray: 2 4;
}
.axis {
  stroke: #a80000;
  stroke-width: 2;
}
.tick {
  fill: #d02828;
  font-size: 18px;
}
.tick.small {
  font-size: 16px;
}
.lbl {
  fill: #b0b0b0;
  font-size: 17px;
  letter-spacing: 0.5px;
}
.zhao {
  fill: #ffff00;
  font-size: 17px;
}
.dollar {
  fill: #e02020;
  font-size: 16px;
  font-weight: 700;
}
.chip {
  fill: #fff;
  font-size: 16px;
}
.l-wht,
.l-gray,
.l-yel,
.l-mag,
.l-green {
  stroke-width: 1.6;
}
.l-wht {
  stroke: #d0d0d0;
}
.l-gray {
  stroke: #a0a0a0;
}
.l-yel {
  stroke: #d8d800;
}
.l-mag {
  stroke: #d000d0;
}
.l-green {
  stroke: #00d800;
  stroke-width: 2;
}

.cur-value {
  position: absolute;
  left: 1713px;
  top: 144px;
  width: 72px;
  height: 22px;
  border-top: 1px solid #a00000;
  border-bottom: 1px solid #a00000;
  background: #000080;
  color: #b8b8d8;
  font-size: 17px;
  line-height: 22px;
  letter-spacing: 1px;
}
.ime {
  position: absolute;
  left: 1282px;
  top: 123px;
  display: flex;
  gap: 1px;
  width: 157px;
  height: 25px;
  padding: 3px;
  box-sizing: border-box;
  background: #d4d0c8;
  border: 1px solid #fff;
  border-right-color: #808080;
  border-bottom-color: #808080;
}
.ime-btn {
  display: flex;
  align-items: center;
  justify-content: center;
  height: 17px;
  background: #c0c0c0;
  box-shadow: 1px 1px 0 #555;
  color: #000;
  font-size: 15px;
}
.ime-a {
  width: 19px;
  color: #8b0000;
  font-family: "Liberation Serif", serif;
  font-weight: 700;
}
.ime-name {
  width: 68px;
}
.ime-moon,
.ime-dot,
.ime-kbd {
  width: 19px;
}

.date-axis {
  flex: none;
  height: 22px;
  border-top: 2px solid #a80000;
}
.date-axis svg {
  display: block;
}
.date-red {
  fill: #e02020;
  font-size: 18px;
}
.date-cur {
  fill: #b8b8b8;
  font-size: 17.5px;
  letter-spacing: 0.2px;
}
.date-day {
  fill: #c0c0c0;
  font-size: 19px;
}

.tabs {
  display: flex;
  flex: none;
  border-top: 2px solid #a00000;
  font-size: 18px;
  line-height: 22px;
}
.tabs span {
  display: flex;
  align-items: center;
  justify-content: center;
  padding: 0 5px;
  border-right: 1px solid #a00000;
  white-space: nowrap;
}
.tabs-a {
  height: 23px;
}
.tabs-b {
  height: 25px;
  border-bottom: 2px solid #a00000;
}
.tabs-b span {
  padding-top: 2px;
  box-sizing: border-box;
}
.tabs .tabs-end {
  margin-left: auto;
  margin-right: 76px;
  border-left: 1px solid #a00000;
  color: #909090;
}
.cyan {
  color: #30f0f0;
}
.olive {
  color: #c0c000;
}

/* quote panel */
.panel {
  flex: none;
  width: 336px;
  height: 100%;
  border-left: 2px solid #a00000;
  box-sizing: border-box;
  overflow: hidden;
}
.name-row {
  display: flex;
  align-items: center;
  height: 41px;
  padding-left: 51px;
}
.name {
  color: #00d8f8;
  font-size: 29px;
  font-weight: 500;
  line-height: 36px;
}
.code {
  margin-left: 8px;
  margin-top: 6px;
  color: #b0b0b0;
  font-size: 20px;
  font-weight: 700;
  letter-spacing: 0.6px;
}
.r {
  margin: -10px 0 0 7px;
  color: #ff4040;
  font-size: 14px;
  font-weight: 700;
}
.price-row {
  display: flex;
  align-items: center;
  height: 42px;
  padding-left: 5px;
  border-bottom: 2px solid #a00000;
  color: #00e000;
  font-weight: 700;
}
.last {
  width: 119px;
  font-size: 29px;
  letter-spacing: 0.4px;
}
.tri {
  width: 0;
  height: 0;
  border-left: 10px solid transparent;
  border-right: 10px solid transparent;
  border-top: 20px solid #00e000;
}
.chg {
  width: 90px;
  margin-left: 1px;
  font-size: 28px;
  letter-spacing: 0.6px;
}
.pct {
  font-size: 28px;
  letter-spacing: 0.3px;
}
.book-row,
.q-row,
.flow-row,
.tick-row {
  display: flex;
  align-items: center;
  padding-left: 3px;
  white-space: nowrap;
}
.book {
  height: 136px;
}
.book-row {
  height: 27.2px;
  padding-bottom: 2px;
  box-sizing: border-box;
}
.book-buy {
  height: 138px;
}
.lab {
  color: #b8b8b8;
  font-size: 23px;
  line-height: 24px;
}
.book .lab {
  width: 107px;
}
.pri,
.t-pri {
  color: #00e000;
  font-size: 20.5px;
  font-weight: 700;
  letter-spacing: 0.4px;
  line-height: 22px;
}
.vol {
  margin-left: auto;
  margin-right: 3px;
  color: #c0c000;
  font-size: 20.5px;
  font-weight: 700;
  letter-spacing: 0.4px;
  line-height: 22px;
}
.vol em,
.t-vol em {
  font-size: 22px;
  font-style: normal;
  font-weight: 400;
  line-height: 1;
}
.mid-line {
  height: 2px;
  background: linear-gradient(90deg, #b07820 50%, #2a6aa8 50%);
}
.quote {
  border-top: 2px solid #a00000;
}
.q-row {
  height: 28.5px;
}
.quote-b {
  height: 91px;
}
.quote-b .q-row {
  height: 28.7px;
}
.q-row .lab:first-child {
  width: 75px;
}
.qv {
  width: 86px;
  margin-right: 8px;
  text-align: right;
  font-size: 20.5px;
  font-weight: 700;
  letter-spacing: 0.4px;
  line-height: 22px;
}
.q2 {
  width: 70px;
}
.q-row .qv:last-child {
  flex: none;
  width: 89px;
  margin-right: 0;
}
.green {
  color: #00e000;
}
.red {
  color: #ff3030;
}
.gray {
  color: #b8b8b8;
}
.purple {
  color: #c000d0;
}
.flows {
  height: 118px;
  border-top: 2px solid #a00000;
  border-bottom: 2px solid #a00000;
}
.flow-row {
  height: 28.7px;
  color: #00e000;
}
.flow-name {
  width: 139px;
}
.flow-bar {
  width: 46px;
}
.flow-bar i {
  display: block;
  height: 10px;
  background: #00e000;
}
.flow-v {
  width: 82px;
  text-align: right;
  font-size: 21px;
  line-height: 22px;
}
.flow-p {
  flex: 1;
  margin-right: 3px;
  text-align: right;
  font-size: 21px;
  line-height: 22px;
}
.ticks {
  margin-top: -1px;
}
.tick-row {
  height: 27.1px;
  font-weight: 700;
  font-size: 20px;
  line-height: 22px;
}
.t-time {
  width: 103px;
  color: #b8b8b8;
}
.t-pri {
  width: 52px;
}
.t-vol {
  width: 94px;
  text-align: right;
  color: #c0c000;
  letter-spacing: 0.2px;
}
.t-vol.big {
  color: #e000e0;
}
.t-side {
  width: 18px;
  margin-left: 18px;
  font-size: 21px;
  font-weight: 400;
}
.t-cnt {
  flex: 1;
  margin-right: 3px;
  text-align: right;
  color: #a8a8a8;
}

/* side toolbar */
.tools {
  display: flex;
  flex-direction: column;
  flex: none;
  width: 37px;
  height: 100%;
  margin-top: -2px;
  background: #f0f0f0;
  overflow: hidden;
}
.tool {
  display: flex;
  align-items: center;
  justify-content: center;
  flex: none;
  height: 34.4px;
}
.tool > svg {
  width: 24px;
  height: 24px;
}
.box {
  display: flex;
  align-items: center;
  justify-content: center;
  width: 22px;
  height: 22px;
  box-sizing: border-box;
  border: 2px solid #3a7ee0;
  background: #fff;
  color: #1a5ad0;
  font-size: 16px;
}
.box.plain {
  border: 0;
  background: transparent;
  width: 24px;
  height: 24px;
}
.box.round {
  border-radius: 6px;
  border-color: #2a9a9a;
}
.box svg {
  width: 100%;
  height: 100%;
}
.txt {
  font-size: 15px;
  letter-spacing: -1px;
}
.txt.small {
  font-size: 12px;
}
.orange {
  color: #e88020;
  font-weight: 700;
  font-size: 17px;
  letter-spacing: 0;
}
.tool-sep {
  flex: none;
  height: 1.5px;
  margin: 5px 3px;
  background: #b0b0b0;
}
.tool-sep.wide {
  margin: 6px 3px;
}
.rsi {
  color: #2a4ad0;
  font-size: 15px;
}
.dollar-ico {
  color: #d83030;
  font-size: 24px;
}
.num {
  color: #2a5aa8;
  font-size: 17px;
}
.day {
  margin-top: 2px;
  background: #fff;
  border-top: 1px solid #c8c8c8;
}

/* index strip */
.status {
  display: flex;
  align-items: center;
  flex: none;
  height: 35px;
  background: #f0f0f0;
  color: #222;
  line-height: 26px;
  white-space: nowrap;
}
.status-ico {
  display: block;
  width: 14px;
  height: 19px;
  margin-left: 3px;
  border: 2px solid #e8a020;
  background: linear-gradient(#f8d060, #f8f0c0 50%, #e8a830);
}
.index {
  display: flex;
  align-items: center;
  margin-left: 3px;
  margin-right: 21px;
}
.ix-name {
  font-size: 24px;
}
.ix-val {
  margin-left: 22px;
  color: #008000;
  font-size: 20.5px;
}
.index:first-of-type .ix-val {
  margin-left: 26px;
}
.ix-val.first,
.index:first-of-type .ix-val.first {
  margin-left: 5px;
}
.ix-amt {
  margin-left: 21px;
  color: #111;
  font-size: 21px;
}
.ix-amt em {
  font-size: 24px;
  font-style: normal;
  line-height: 1;
}
.turnover {
  padding-left: 4px;
  border-left: 2px solid #b0b0b0;
  font-size: 23px;
}

.watermark {
  position: absolute;
  left: 1360px;
  top: 1314px;
  display: flex;
  align-items: center;
  width: 800px;
  height: 81px;
  background: rgba(123, 168, 216, 0.98);
}
.wm-cn {
  width: 298px;
  margin-left: 18px;
  color: #14148c;
  font-family: "Noto Sans CJK SC", sans-serif;
  font-size: 56px;
  font-weight: 900;
  line-height: 81px;
}
.wm-logo {
  flex: none;
  margin-left: 5px;
}
.wm-url {
  margin-left: 28px;
  color: #fff;
  font-family: "DejaVu Serif", serif;
  font-size: 51px;
  font-weight: 700;
  letter-spacing: -2px;
}
</style>
